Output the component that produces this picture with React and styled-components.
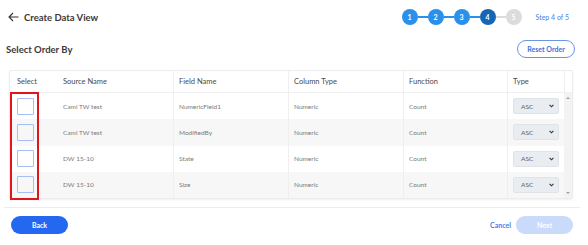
import styled, { createGlobalStyle } from 'styled-components'

const GlobalStyle = createGlobalStyle`
  body {
    margin: 0;
    background: #ffffff;
    font-family: Lato, "Liberation Sans", sans-serif;
    color: #333333;
  }
`

const Page = styled.div`
  width: 588px;
  height: 245px;
  position: relative;
  overflow: hidden;
`

const TopBar = styled.div`
  display: flex;
  align-items: center;
  height: 34px;
  padding: 0 19px 0 8px;
`

const BackLink = styled.div`
  display: flex;
  align-items: center;
  gap: 5px;
  font-size: 9.5px;
  font-weight: 700;
  color: #3a3a3a;
`

const Stepper = styled.div`
  margin-left: auto;
  display: flex;
  align-items: center;
`

const Step = styled.div`
  display: flex;
  align-items: center;
`

const StepDot = styled.div`
  width: 16px;
  height: 16px;
  border-radius: 50%;
  background: ${(p) => p.bg};
  color: #ffffff;
  font-size: 7px;
  font-weight: 700;
  display: flex;
  align-items: center;
  justify-content: center;
`

const StepLine = styled.div`
  width: 10px;
  height: 2px;
  background: ${(p) => p.bg};
`

const StepLabel = styled.div`
  margin-left: 14px;
  font-size: 7px;
  color: #4a80e8;
`

const SectionHead = styled.div`
  display: flex;
  align-items: center;
  justify-content: space-between;
  height: 20px;
  margin-top: 5px;
  padding: 0 13px 0 6px;
`

const SectionTitle = styled.div`
  font-size: 9.5px;
  font-weight: 700;
  color: #3a3a3a;
`

const OutlineButton = styled.button`
  width: 58px;
  height: 18px;
  border: 1px solid #6b93e6;
  border-radius: 10px;
  background: #ffffff;
  color: #3f6fd8;
  font-family: inherit;
  font-size: 7px;
  font-weight: 700;
  padding: 0;
`

const Card = styled.div`
  position: relative;
  margin: 11px 15px 0 9px;
  height: 129px;
  border: 1px solid #ececec;
  border-radius: 2px;
  box-shadow: 0 1px 2px rgba(0, 0, 0, 0.06);
  box-sizing: border-box;
`

const cols = '48px 115px 115px 115px 104px 57px'

const HeadRow = styled.div`
  display: grid;
  grid-template-columns: ${cols} 1fr;
  height: 22px;
  border-bottom: 1px solid #f0f0f0;
  box-sizing: border-box;
`

const HeadCell = styled.div`
  display: flex;
  align-items: center;
  padding-left: ${(p) => p.pad || 5}px;
  font-size: 7.5px;
  color: #4a4a4a;
  border-left: ${(p) => (p.divider ? '1px solid #efefef' : 'none')};
`

const Body = styled.div`
  display: flex;
  height: 105px;
`

const Rows = styled.div`
  flex: 1;
`

const Row = styled.div`
  display: grid;
  grid-template-columns: ${cols};
  height: 26.25px;
  background: ${(p) => (p.striped ? '#f7f7f7' : '#ffffff')};
`

const Cell = styled.div`
  display: flex;
  align-items: center;
  padding-left: ${(p) => p.pad || 5}px;
  font-size: 6.5px;
  color: #7a7a7a;
  border-left: ${(p) => (p.divider ? '1px solid #efefef' : 'none')};
`

const Checkbox = styled.div`
  width: 15px;
  height: 15px;
  border: 1px solid #a4bff2;
  border-radius: 1px;
`

const SelectBox = styled.div`
  width: 46px;
  height: 16px;
  box-sizing: border-box;
  border: 1px solid #e0e3e8;
  border-radius: 2px;
  background: #e9ecf0;
  display: flex;
  align-items: center;
  justify-content: space-between;
  padding: 0 4px 0 7px;
  font-size: 6.5px;
  color: #5a5a5a;
`

const Scroll = styled.div`
  width: 9px;
  background: #f3f3f3;
  display: flex;
  flex-direction: column;
  justify-content: space-between;
  align-items: center;
  padding: 4px 0;
  box-sizing: border-box;
`

const Arrow = styled.div`
  width: 0;
  height: 0;
  border-left: 2px solid transparent;
  border-right: 2px solid transparent;
  ${(p) => (p.up ? 'border-bottom: 2px solid #a0a0a0;' : 'border-top: 2px solid #a0a0a0;')}
`

const Highlight = styled.div`
  position: absolute;
  left: 0;
  top: 21px;
  width: 29px;
  height: 108px;
  border: 2px solid #e3141b;
  box-sizing: border-box;
`

const Divider = styled.div`
  margin: 8px 8px 0 4px;
  height: 1px;
  background: #ececec;
`

const Footer = styled.div`
  display: flex;
  align-items: center;
  padding: 8px 15px 0 11px;
`

const PrimaryButton = styled.button`
  width: 57px;
  height: 18px;
  border: none;
  border-radius: 10px;
  background: ${(p) => (p.disabled ? '#c9dafb' : '#2468f2')};
  color: #ffffff;
  font-family: inherit;
  font-size: 7px;
  font-weight: 700;
  padding: 0;
`

const TextButton = styled.div`
  margin-left: auto;
  margin-right: 5px;
  font-size: 7px;
  font-weight: 700;
  color: #4a80e8;
`

const steps = [
  { n: 1, bg: '#2a90ea' },
  { n: 2, bg: '#2a90ea' },
  { n: 3, bg: '#2a90ea' },
  { n: 4, bg: '#1766b4' },
  { n: 5, bg: '#dcdcdc' },
]

const rows = [
  { source: 'Cami TW test', field: 'NumericField1' },
  { source: 'Cami TW test', field: 'ModifiedBy' },
  { source: 'DW 15-10', field: 'State' },
  { source: 'DW 15-10', field: 'Size' },
]

export default function App() {
  return (
    <Page>
      <GlobalStyle />
      <TopBar>
        <BackLink>
          <svg width="11" height="10" viewBox="0 0 11 10" fill="none" stroke="#333" strokeWidth="1.1">
            <path d="M10.5 5H1M5 1 1 5l4 4" />
          </svg>
          Create Data View
        </BackLink>
        <Stepper>
          {steps.map((s, i) => (
            <Step key={s.n}>
              {i > 0 && <StepLine bg={s.n === 5 ? '#dcdcdc' : '#2a90ea'} />}
              <StepDot bg={s.bg}>{s.n}</StepDot>
            </Step>
          ))}
          <StepLabel>Step 4 of 5</StepLabel>
        </Stepper>
      </TopBar>

      <SectionHead>
        <SectionTitle>Select Order By</SectionTitle>
        <OutlineButton>Reset Order</OutlineButton>
      </SectionHead>

      <Card>
        <HeadRow>
          <HeadCell pad={7}>Select</HeadCell>
          <HeadCell>Source Name</HeadCell>
          <HeadCell divider>Field Name</HeadCell>
          <HeadCell divider>Column Type</HeadCell>
          <HeadCell divider>Function</HeadCell>
          <HeadCell divider>Type</HeadCell>
          <HeadCell divider />
        </HeadRow>
        <Body>
          <Rows>
            {rows.map((r, i) => (
              <Row key={i} striped={i % 2 === 1}>
                <Cell pad={7}>
                  <Checkbox />
                </Cell>
                <Cell>{r.source}</Cell>
                <Cell divider>{r.field}</Cell>
                <Cell divider>Numeric</Cell>
                <Cell divider>Count</Cell>
                <Cell divider>
                  <SelectBox>
                    ASC
                    <svg width="5" height="4" viewBox="0 0 5 4" fill="none" stroke="#333" strokeWidth="1.1">
                      <path d="M.6 .8 2.5 2.8 4.4 .8" />
                    </svg>
                  </SelectBox>
                </Cell>
              </Row>
            ))}
          </Rows>
          <Scroll>
            <Arrow up />
            <Arrow />
          </Scroll>
        </Body>
        <Highlight />
      </Card>

      <Divider />

      <Footer>
        <PrimaryButton>Back</PrimaryButton>
        <TextButton>Cancel</TextButton>
        <PrimaryButton disabled>Next</PrimaryButton>
      </Footer>
    </Page>
  )
}
